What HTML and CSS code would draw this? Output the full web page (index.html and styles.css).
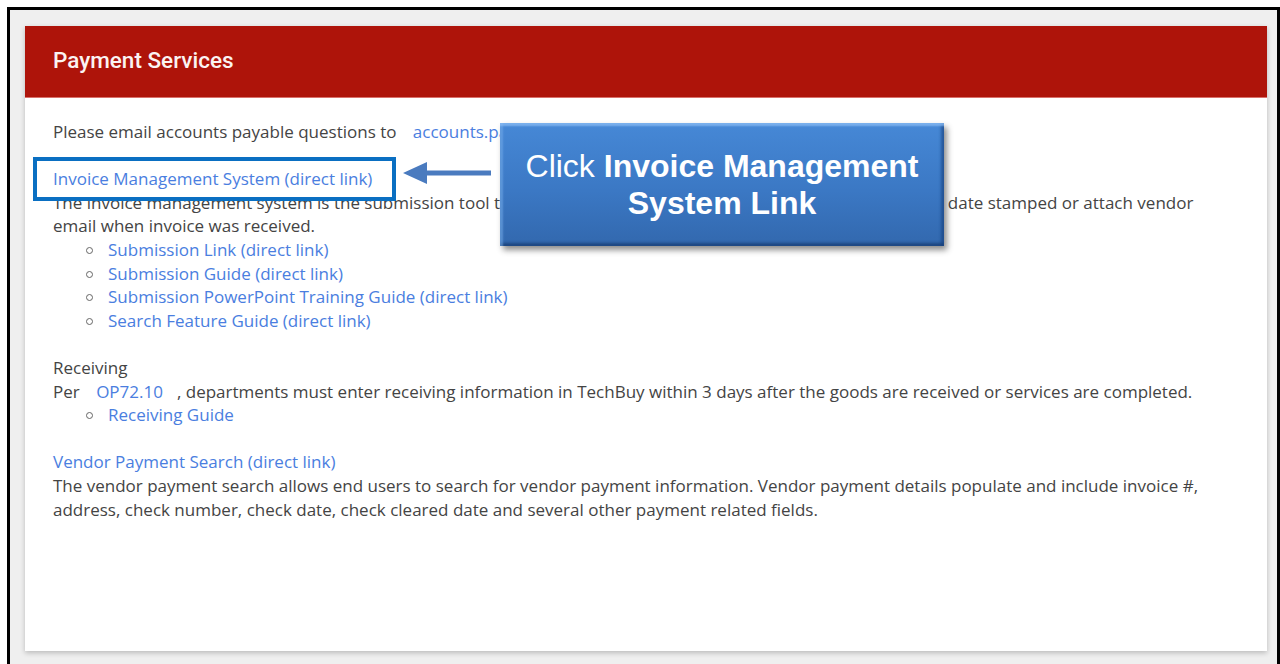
FILE: index.html
```html
<!DOCTYPE html>
<html lang="en">
<head>
<meta charset="utf-8">
<title>Payment Services</title>
<link rel="stylesheet" href="styles.css">
</head>
<body>
<div class="frame">
  <section class="card">
    <header class="card-head">Payment Services</header>
    <div class="card-body">
      <div class="block">
        Please email accounts payable questions to <a class="pad" href="#">accounts.payable@ttu.edu</a>
      </div>

      <div class="block">
        <a href="#">Invoice Management System (direct link)</a><br>
        The invoice management system is the submission tool to submit invoices to Accounts Payable. Invoices must be date stamped or attach vendor email when invoice was received.
        <ul>
          <li><a href="#">Submission Link (direct link)</a></li>
          <li><a href="#">Submission Guide (direct link)</a></li>
          <li><a href="#">Submission PowerPoint Training Guide (direct link)</a></li>
          <li><a href="#">Search Feature Guide (direct link)</a></li>
        </ul>
      </div>

      <div class="block">
        Receiving<br>
        Per <a class="pad" href="#">OP72.10</a>, departments must enter receiving information in TechBuy within 3 days after the goods are received or services are completed.
        <ul>
          <li><a href="#">Receiving Guide</a></li>
        </ul>
      </div>

      <div class="block">
        <a href="#">Vendor Payment Search (direct link)</a><br>
        The vendor payment search allows end users to search for vendor payment information. Vendor payment details populate and include invoice #, address, check number, check date, check cleared date and several other payment related fields.
      </div>
    </div>

    <div class="highlight"></div>
    <svg class="pointer" width="90" height="24" viewBox="0 0 90 24">
      <polygon points="0,12 24,1 24,9.5 88,9.5 88,14.5 24,14.5 24,23" fill="#4a7bbf"/>
    </svg>
    <div class="callout">
      <span>Click <b>Invoice Management System Link</b></span>
    </div>
  </section>
</div>
</body>
</html>
```

FILE: styles.css
```css
html, body {
  margin: 0;
  padding: 0;
  background: #fff;
  overflow: hidden;
}

.frame {
  margin: 7px 0 0 7px;
  height: calc(100vh - 7px);
  border: 3px solid #000;
  border-bottom: none;
  background: #efefef;
  padding: 16px 10px 0 15px;
  box-sizing: border-box;
}

.card {
  position: relative;
  height: 625px;
  background: #fff;
  box-shadow: 0 2px 5px rgba(0, 0, 0, 0.22);
}

.card-head {
  height: 72px;
  display: flex;
  align-items: center;
  padding-left: 28px;
  padding-bottom: 3px;
  box-sizing: border-box;
  background: #ae140a;
  border-bottom: 1px solid #d9716b;
  color: #fbf3f2;
  font-family: Roboto, "Liberation Sans", sans-serif;
  font-weight: 500;
  font-size: 22.5px;
}

.card-body {
  padding: 22px 28px 0 28px;
  color: #444;
  font-family: "Open Sans", "Noto Sans", sans-serif;
  font-size: 17px;
  line-height: 23.6px;
}

.block {
  margin-bottom: 23.6px;
}

.card-body ul {
  margin: 0;
  padding-left: 55px;
  list-style: none;
}

/* hollow circle bullet */
.card-body li::before {
  content: "";
  display: inline-block;
  box-sizing: border-box;
  width: 7px;
  height: 7px;
  margin: 0 15px 2px -22px;
  border: 1.6px solid #666;
  border-radius: 50%;
  vertical-align: middle;
}

.card-body a {
  color: #4a7ee0;
  text-decoration: none;
}

.card-body a.pad {
  margin: 0 14px 0 12px;
}

.highlight {
  position: absolute;
  left: 8px;
  top: 131px;
  width: 363px;
  height: 44px;
  box-sizing: border-box;
  border: 4px solid #0a6fc2;
}

.pointer {
  position: absolute;
  left: 378px;
  top: 135px;
}

.callout {
  position: absolute;
  left: 475px;
  top: 97px;
  width: 444px;
  height: 123px;
  box-sizing: border-box;
  padding: 0 16px;
  display: flex;
  align-items: center;
  justify-content: center;
  text-align: center;
  background: linear-gradient(#4688d6, #3b78c4 55%, #3268ae);
  box-shadow:
    inset 0 4px 2px -1px rgba(140, 190, 245, 0.75),
    inset 4px 0 2px -1px rgba(120, 175, 235, 0.55),
    inset -4px 0 3px -1px rgba(20, 60, 120, 0.6),
    inset 0 -4px 3px -1px rgba(20, 55, 110, 0.7),
    3px 4px 6px rgba(0, 0, 0, 0.45);
  color: #fff;
  font-family: "Liberation Sans", Arial, sans-serif;
  font-size: 32px;
  line-height: 37px;
}

.callout b {
  font-weight: 700;
}
```
